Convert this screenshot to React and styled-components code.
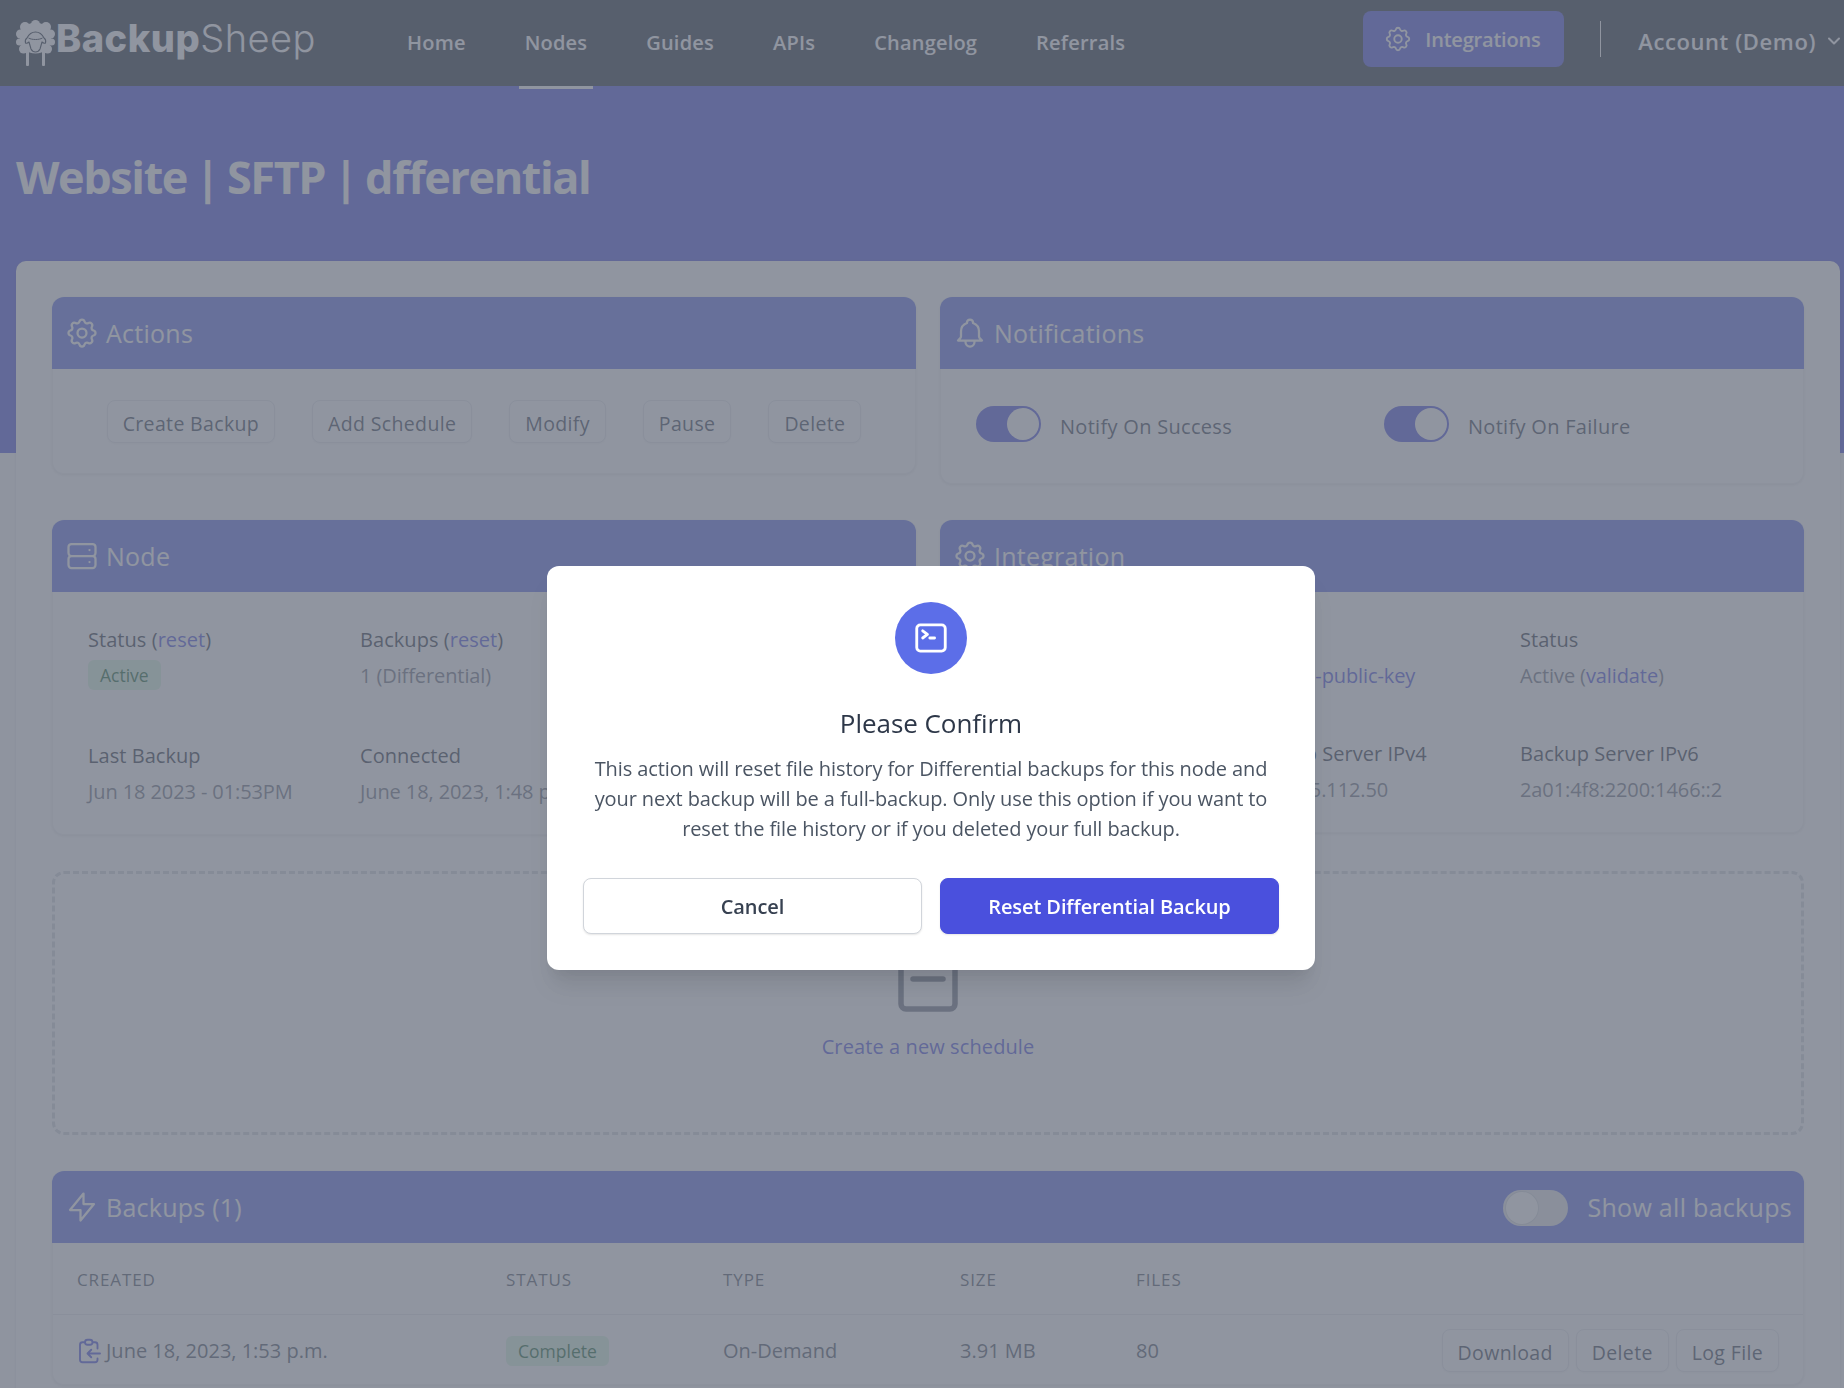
import styled, { createGlobalStyle } from 'styled-components';

const SANS = '"Open Sans", "Noto Sans", sans-serif';

const GlobalStyle = createGlobalStyle`
  html, body { margin: 0; padding: 0; background: #f9fafb; }
  * { box-sizing: border-box; }
  body { font-family: ${SANS}; }
`;

const Page = styled.div`
  position: relative;
  width: 1844px;
  height: 1388px;
  overflow: hidden;
  background: #fbfbfc;
`;

/* top navigation */
const Nav = styled.nav`
  display: flex;
  align-items: center;
  height: 86px;
  padding: 0 4px 0 16px;
  background: #1f2937;
`;
const Logo = styled.div`
  display: flex;
  align-items: center;
  width: 300px;
  margin-top: -10px;
  color: #fff;
  font-family: Inter, sans-serif;
  font-size: 38px;
  letter-spacing: 0.5px;
`;
const LogoBold = styled.span`
  font-weight: 800;
  margin-left: 1px;
`;
const LogoThin = styled.span`
  font-weight: 300;
`;
const NavLinks = styled.div`
  display: flex;
  align-items: stretch;
  height: 86px;
  margin-left: 85px;
  gap: 47px;
`;
const NavLink = styled.a`
  display: flex;
  align-items: center;
  padding: 0 6px 2px;
  margin-bottom: -3px;
  color: #fff;
  font-size: 20px;
  font-weight: 600;
  letter-spacing: 0.2px;
  border-bottom: 3px solid ${p => (p.$active ? '#fff' : 'transparent')};
`;
const NavRight = styled.div`
  display: flex;
  align-items: center;
  margin-left: auto;
`;
const IntegrationsButton = styled.button`
  display: flex;
  align-items: center;
  gap: 12px;
  width: 201px;
  height: 56px;
  margin-top: -8px;
  padding: 0 0 0 20px;
  border: 0;
  border-radius: 8px;
  background: #4a50dd;
  color: #fff;
  font-family: ${SANS};
  font-size: 20px;
  font-weight: 600;
  letter-spacing: -0.2px;
`;
const NavDivider = styled.div`
  width: 1px;
  height: 36px;
  margin: -8px 37px 0 36px;
  background: #fff;
`;
const Account = styled.div`
  display: flex;
  align-items: center;
  gap: 12px;
  margin-top: -4px;
  color: #fff;
  font-size: 22px;
  font-weight: 600;
  letter-spacing: 0.6px;
`;

/* hero band */
const Hero = styled.header`
  height: 367px;
  padding: 60px 16px 0;
  background: #4a50dd;
`;
const Title = styled.h1`
  margin: 0;
  color: #fff;
  font-size: 45px;
  font-weight: 700;
  line-height: 62px;
  letter-spacing: -1.4px;
  word-spacing: -2px;
`;

const Main = styled.main`
  display: flex;
  flex-direction: column;
  gap: 36px;
  width: 1824px;
  height: 1200px;
  margin: -192px 0 0 16px;
  padding: 36px;
  border-radius: 10px 10px 0 0;
  background: #fff;
  box-shadow: 0 1px 3px rgba(0, 0, 0, 0.12);
`;
const Columns = styled.div`
  display: grid;
  grid-template-columns: 864px 864px;
  column-gap: 24px;
  row-gap: 36px;
  align-items: start;
`;
const Card = styled.section`
  border: 1px solid #f1f2f4;
  border-top: 0;
  border-radius: 12px;
  background: #fff;
  box-shadow: 0 1px 3px rgba(0, 0, 0, 0.1);
`;
const CardHeader = styled.div`
  display: flex;
  align-items: center;
  height: 72px;
  margin: 0 -1px;
  padding: 0 12px;
  overflow: hidden;
  border-radius: 12px 12px 0 0;
  background: #5c6ee8;
  color: #fff;
`;
const CardTitle = styled.h2`
  margin: 0 0 0 6px;
  font-size: 25px;
  font-weight: 400;
  line-height: 34px;
  letter-spacing: 0.25px;
`;
const Glyph = styled.svg`
  flex: none;
  display: block;
  fill: none;
  stroke: currentColor;
  stroke-width: ${p => p.$stroke || 1.5};
  stroke-linecap: round;
  stroke-linejoin: round;
`;

const ActionsBody = styled.div`
  display: flex;
  justify-content: center;
  gap: 37px;
  padding: 31px 0 30px;
`;
const OutlineButton = styled.button`
  height: 43px;
  padding: 3px 15px 0;
  border: 1px solid #e5e7eb;
  border-radius: 8px;
  background: #fff;
  box-shadow: 0 1px 2px rgba(0, 0, 0, 0.05);
  color: #374151;
  font-family: ${SANS};
  font-size: 19.5px;
  font-weight: 500;
  letter-spacing: 0.35px;
  white-space: nowrap;
`;

const NotifyBody = styled.div`
  display: grid;
  grid-template-columns: 384px 384px;
  gap: 24px;
  padding: 36px 35px 34px;
`;
const NotifyRow = styled.div`
  display: flex;
  align-items: flex-start;
  gap: 19px;
`;
const Toggle = styled.div`
  flex: none;
  position: relative;
  width: 65px;
  height: 36px;
  margin-top: 1px;
  border-radius: 18px;
  background: ${p => (p.$on ? '#4a50dd' : '#e5e7eb')};
`;
const Knob = styled.span`
  position: absolute;
  top: 2px;
  left: ${p => (p.$on ? '31px' : '3px')};
  width: 32px;
  height: 32px;
  border-radius: 50%;
  background: #fff;
  box-shadow: ${p => (p.$on ? 'none' : '0 0 0 1px #d1d5db')};
`;
const NotifyLabel = styled.span`
  color: #374151;
  font-size: 20px;
  line-height: 44px;
  letter-spacing: 0.3px;
`;

const DetailGrid = styled.dl`
  display: grid;
  grid-template-columns: repeat(3, 248px);
  column-gap: 24px;
  row-gap: 53px;
  margin: 0;
  padding: 35px 35px 30px;
`;
const Detail = styled.div`
  min-width: 0;
  white-space: nowrap;
`;
const DetailLabel = styled.dt`
  color: #2b3340;
  font-size: 20px;
  font-weight: 500;
  line-height: 25px;
  letter-spacing: 0.05px;
`;
const DetailValue = styled.dd`
  margin: 11px 0 0;
  color: #6b7280;
  font-size: 20px;
  line-height: 25px;
  letter-spacing: -0.1px;
`;
const TextLink = styled.a`
  color: #4a50dd;
  font-weight: 400;
`;
const Badge = styled.span`
  display: inline-flex;
  align-items: center;
  justify-content: center;
  height: 30px;
  padding: 0 12px;
  border-radius: 6px;
  background: #d8f6de;
  color: #166534;
  font-size: 17.5px;
  font-weight: 500;
  letter-spacing: 0;
`;
const BadgeSlot = styled.div`
  margin-top: 8px;
  line-height: 0;
`;

const ScheduleBox = styled.div`
  display: flex;
  flex-direction: column;
  align-items: center;
  justify-content: flex-end;
  height: 264px;
  padding-bottom: 70px;
  border: 3px dashed #d1d5db;
  border-radius: 12px;
  color: #4a50dd;
  font-size: 20px;
  font-weight: 500;
  letter-spacing: 0.1px;
  line-height: 30px;
`;
const ScheduleIcon = styled(Glyph)`
  margin-bottom: 20px;
  color: #6b7280;
`;

const BackupHeaderRight = styled.div`
  display: flex;
  align-items: center;
  gap: 19px;
  margin-left: auto;
`;
const ShowAll = styled.span`
  font-size: 25px;
  line-height: 34px;
  letter-spacing: 0.3px;
`;
const TableGrid = styled.div`
  display: grid;
  grid-template-columns: 429px 217px 237px 176px 1fr;
  align-items: center;
  height: ${p => p.$height}px;
  padding: 2px 24px 0;
  border-bottom: ${p => (p.$head ? '1px solid #e5e7eb' : '0')};
`;
const TableHead = styled.div`
  color: #4b5563;
  font-size: 17px;
  letter-spacing: 0.9px;
  text-transform: uppercase;
`;
const TableCell = styled.div`
  display: flex;
  align-items: center;
  color: #4b5563;
  font-size: 20px;
  letter-spacing: 0;
  white-space: nowrap;
`;
const RowIcon = styled(Glyph)`
  margin: 0 1px 0 -2px;
  color: #4a50dd;
`;
const RowActions = styled.div`
  display: flex;
  justify-content: flex-end;
  gap: 7px;
  margin-left: auto;
`;

/* dialog on top of the page */
const Backdrop = styled.div`
  position: fixed;
  inset: 0;
  padding: 566px 0 0 547px;
  background: rgba(107, 114, 128, 0.75);
`;
const Dialog = styled.div`
  display: flex;
  flex-direction: column;
  align-items: center;
  width: 768px;
  height: 404px;
  padding: 36px;
  border-radius: 12px;
  background: #fff;
  box-shadow: 0 20px 25px -5px rgba(0, 0, 0, 0.1), 0 10px 10px -5px rgba(0, 0, 0, 0.04);
`;
const DialogIcon = styled.div`
  display: flex;
  align-items: center;
  justify-content: center;
  flex: none;
  width: 72px;
  height: 72px;
  border-radius: 50%;
  background: #5c6ee8;
  color: #fff;
`;
const DialogTitle = styled.h3`
  margin: 33px 0 0;
  color: #2d3748;
  font-size: 26px;
  font-weight: 500;
  line-height: 32px;
  letter-spacing: -0.05px;
`;
const DialogText = styled.p`
  margin: 15px 0 0;
  color: #4b5563;
  font-size: 20px;
  line-height: 30px;
  letter-spacing: -0.1px;
  text-align: center;
`;
const DialogButtons = styled.div`
  display: grid;
  grid-template-columns: 1fr 1fr;
  gap: 18px;
  width: 100%;
  margin-top: 34px;
`;
const DialogButton = styled.button`
  height: 56px;
  border: 1px solid ${p => (p.$primary ? '#4a50dd' : '#d1d5db')};
  border-radius: 8px;
  background: ${p => (p.$primary ? '#4a50dd' : '#fff')};
  box-shadow: 0 1px 2px rgba(0, 0, 0, 0.1);
  color: ${p => (p.$primary ? '#fff' : '#374151')};
  font-family: ${SANS};
  font-size: 20px;
  font-weight: 600;
  letter-spacing: -0.1px;
`;

const COG = 'M10.325 4.317c.426-1.756 2.924-1.756 3.35 0a1.724 1.724 0 002.573 1.066c1.543-.94 3.31.826 2.37 2.37a1.724 1.724 0 001.065 2.572c1.756.426 1.756 2.924 0 3.35a1.724 1.724 0 00-1.066 2.573c.94 1.543-.826 3.31-2.37 2.37a1.724 1.724 0 00-2.572 1.065c-.426 1.756-2.924 1.756-3.35 0a1.724 1.724 0 00-2.573-1.066c-1.543.94-3.31-.826-2.37-2.37a1.724 1.724 0 00-1.065-2.572c-1.756-.426-1.756-2.924 0-3.35a1.724 1.724 0 001.066-2.573c-.94-1.543.826-3.31 2.37-2.37.996.608 2.296.07 2.572-1.065zM15 12a3 3 0 11-6 0 3 3 0 016 0z';
const BELL = 'M15 17h5l-1.405-1.405A2.032 2.032 0 0118 14.158V11a6.002 6.002 0 00-4-5.659V5a2 2 0 10-4 0v.341C7.67 6.165 6 8.388 6 11v3.159c0 .538-.214 1.055-.595 1.436L4 17h5m6 0v1a3 3 0 11-6 0v-1m6 0H9';
const SERVER = 'M5 12h14M5 12a2 2 0 01-2-2V6a2 2 0 012-2h14a2 2 0 012 2v4a2 2 0 01-2 2M5 12a2 2 0 00-2 2v4a2 2 0 002 2h14a2 2 0 002-2v-4a2 2 0 00-2-2m-2-4h.01M17 16h.01';
const BOLT = 'M13 10V3L4 14h7v7l9-11h-7z';
const CLIPBOARD = 'M8 5H6a2 2 0 00-2 2v12a2 2 0 002 2h10a2 2 0 002-2v-1M8 5a2 2 0 002 2h2a2 2 0 002-2M8 5a2 2 0 012-2h2a2 2 0 012 2m0 0h2a2 2 0 012 2v3m2 4H10m0 0l3-3m-3 3l3 3';
const TERMINAL = 'M6.75 7.5l3 2.25-3 2.25m4.5 0h3m-9 8.25h13.5A2.25 2.25 0 0021 18V6a2.25 2.25 0 00-2.25-2.25H5.25A2.25 2.25 0 003 6v12a2.25 2.25 0 002.25 2.25z';

const Icon = ({ d, size = 36, stroke }) => (
  <Glyph viewBox="0 0 24 24" width={size} height={size} $stroke={stroke}>
    <path d={d} />
  </Glyph>
);

const SheepMark = styled.svg`
  flex: none;
  margin-top: 10px;
`;

const Sheep = () => (
  <SheepMark width="39" height="46" viewBox="0 0 39 46">
    <g fill="#fff">
      <circle cx="19.500" cy="18" r="15.500" />
      <circle cx="9" cy="7" r="5" />
      <circle cx="19.500" cy="4.500" r="4.500" />
      <circle cx="30" cy="7" r="5" />
      <circle cx="4.500" cy="14" r="4.500" />
      <circle cx="34.500" cy="14" r="4.500" />
      <circle cx="3.500" cy="22" r="3.500" />
      <circle cx="35.500" cy="22" r="3.500" />
      <circle cx="7.500" cy="29" r="4.500" />
      <circle cx="31.500" cy="29" r="4.500" />
      <rect x="10" y="30" width="3" height="16" rx="1" />
      <rect x="26" y="30" width="3" height="16" rx="1" />
    </g>
    <path d="M11 18c2-4 5-6 8.500-6s6.500 2 8.500 6c1.500 1 2 3 1.500 5-1 .5-2.500 0-3.500-1l-2 7c-1 2-3 3-4.500 3s-3.500-1-4.500-3l-2-7c-1 1-2.500 1.500-3.500 1-.5-2 0-4 1.500-5z" fill="#fff" stroke="#1f2937" strokeWidth="1.100" strokeLinejoin="round" />
    <path d="M12.500 18c3.500 2 10.500 2 14 0" fill="none" stroke="#1f2937" strokeWidth="1" />
  </SheepMark>
);

const Chevron = () => (
  <Glyph viewBox="0 0 12 8" width={12} height={8} $stroke={2}>
    <path d="M1 1.500l5 5 5-5" />
  </Glyph>
);

const Reset = () => (
  <>
    (<TextLink>reset</TextLink>)
  </>
);

export default function App() {
  return (
    <Page>
      <GlobalStyle />
      <Nav>
        <Logo>
          <Sheep />
          <LogoBold>Backup</LogoBold>
          <LogoThin>Sheep</LogoThin>
        </Logo>
        <NavLinks>
          <NavLink>Home</NavLink>
          <NavLink $active>Nodes</NavLink>
          <NavLink>Guides</NavLink>
          <NavLink>APIs</NavLink>
          <NavLink>Changelog</NavLink>
          <NavLink>Referrals</NavLink>
        </NavLinks>
        <NavRight>
          <IntegrationsButton>
            <Icon d={COG} size={30} />
            Integrations
          </IntegrationsButton>
          <NavDivider />
          <Account>
            Account (Demo)
            <Chevron />
          </Account>
        </NavRight>
      </Nav>

      <Hero>
        <Title>Website | SFTP | dfferential</Title>
      </Hero>

      <Main>
        <Columns>
          <Card>
            <CardHeader>
              <Icon d={COG} />
              <CardTitle>Actions</CardTitle>
            </CardHeader>
            <ActionsBody>
              <OutlineButton>Create Backup</OutlineButton>
              <OutlineButton>Add Schedule</OutlineButton>
              <OutlineButton>Modify</OutlineButton>
              <OutlineButton>Pause</OutlineButton>
              <OutlineButton>Delete</OutlineButton>
            </ActionsBody>
          </Card>
          <Card>
            <CardHeader>
              <Icon d={BELL} />
              <CardTitle>Notifications</CardTitle>
            </CardHeader>
            <NotifyBody>
              <NotifyRow>
                <Toggle $on><Knob $on /></Toggle>
                <NotifyLabel>Notify On Success</NotifyLabel>
              </NotifyRow>
              <NotifyRow>
                <Toggle $on><Knob $on /></Toggle>
                <NotifyLabel>Notify On Failure</NotifyLabel>
              </NotifyRow>
            </NotifyBody>
          </Card>
          <Card>
            <CardHeader>
              <Icon d={SERVER} />
              <CardTitle>Node</CardTitle>
            </CardHeader>
            <DetailGrid>
              <Detail>
                <DetailLabel>Status <Reset /></DetailLabel>
                <BadgeSlot><Badge>Active</Badge></BadgeSlot>
              </Detail>
              <Detail>
                <DetailLabel>Backups <Reset /></DetailLabel>
                <DetailValue>1 (Differential)</DetailValue>
              </Detail>
              <Detail />
              <Detail>
                <DetailLabel>Last Backup</DetailLabel>
                <DetailValue>Jun 18 2023 - 01:53PM</DetailValue>
              </Detail>
              <Detail>
                <DetailLabel>Connected</DetailLabel>
                <DetailValue>June 18, 2023, 1:48 p.m.</DetailValue>
              </Detail>
            </DetailGrid>
          </Card>
          <Card>
            <CardHeader>
              <Icon d={COG} />
              <CardTitle>Integration</CardTitle>
            </CardHeader>
            <DetailGrid>
              <Detail />
              <Detail>
                <DetailLabel>&nbsp;</DetailLabel>
                <DetailValue><TextLink>backup-public-key</TextLink></DetailValue>
              </Detail>
              <Detail>
                <DetailLabel>Status</DetailLabel>
                <DetailValue>Active (<TextLink>validate</TextLink>)</DetailValue>
              </Detail>
              <Detail />
              <Detail>
                <DetailLabel>Backup Server IPv4</DetailLabel>
                <DetailValue>135.125.112.50</DetailValue>
              </Detail>
              <Detail>
                <DetailLabel>Backup Server IPv6</DetailLabel>
                <DetailValue>2a01:4f8:2200:1466::2</DetailValue>
              </Detail>
            </DetailGrid>
          </Card>
        </Columns>

        <ScheduleBox>
          <ScheduleIcon viewBox="0 0 60 60" width={60} height={60} $stroke={5.5}>
            <path d="M8 3h44a5 5 0 015 5v44a5 5 0 01-5 5H8a5 5 0 01-5-5V8a5 5 0 015-5z" />
            <path d="M15 27h30" />
          </ScheduleIcon>
          Create a new schedule
        </ScheduleBox>

        <Card>
          <CardHeader>
            <Icon d={BOLT} />
            <CardTitle>Backups (1)</CardTitle>
            <BackupHeaderRight>
              <Toggle><Knob /></Toggle>
              <ShowAll>Show all backups</ShowAll>
            </BackupHeaderRight>
          </CardHeader>
          <TableGrid $head $height={72}>
            <TableHead>Created</TableHead>
            <TableHead>Status</TableHead>
            <TableHead>Type</TableHead>
            <TableHead>Size</TableHead>
            <TableHead>Files</TableHead>
          </TableGrid>
          <TableGrid $height={69}>
            <TableCell>
              <RowIcon viewBox="0 0 24 24" width={30} height={30} $stroke={1.5}><path d={CLIPBOARD} /></RowIcon>
              June 18, 2023, 1:53 p.m.
            </TableCell>
            <TableCell><Badge>Complete</Badge></TableCell>
            <TableCell>On-Demand</TableCell>
            <TableCell>3.91 MB</TableCell>
            <TableCell>
              80
              <RowActions>
                <OutlineButton>Download</OutlineButton>
                <OutlineButton>Delete</OutlineButton>
                <OutlineButton>Log File</OutlineButton>
              </RowActions>
            </TableCell>
          </TableGrid>
        </Card>
      </Main>

      <Backdrop>
        <Dialog>
          <DialogIcon><Icon d={TERMINAL} size={38} stroke={1.8} /></DialogIcon>
          <DialogTitle>Please Confirm</DialogTitle>
          <DialogText>
            This action will reset file history for Differential backups for this node and your next backup will be a full-backup. Only use this option if you want to reset the file history or if you deleted your full backup.
          </DialogText>
          <DialogButtons>
            <DialogButton>Cancel</DialogButton>
            <DialogButton $primary>Reset Differential Backup</DialogButton>
          </DialogButtons>
        </Dialog>
      </Backdrop>
    </Page>
  );
}
